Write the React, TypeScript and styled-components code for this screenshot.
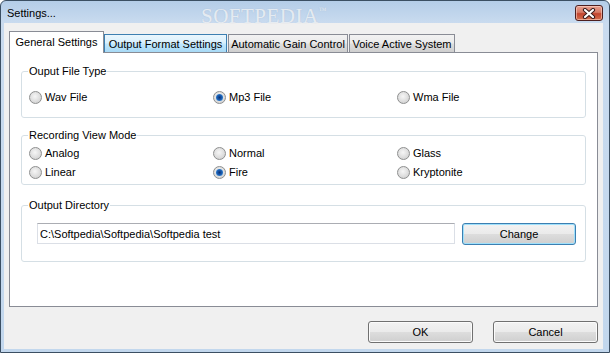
import styled, { createGlobalStyle } from 'styled-components';

const GlobalStyle = createGlobalStyle`
  html, body { margin: 0; padding: 0; background: #ffffff; }
  body { font-family: "Liberation Sans", Arial, sans-serif; font-size: 11px; color: #000; }
  * { box-sizing: border-box; }
`;

const formats = ['Wav File', 'Mp3 File', 'Wma File'];
const viewModes = ['Analog', 'Normal', 'Glass', 'Linear', 'Fire', 'Kryptonite'];

const tabs = [
    { label: 'General Settings', width: 95, state: 'active' },
    { label: 'Output Format Settings', width: 123, state: 'hover' },
    { label: 'Automatic Gain Control', width: 120, state: 'normal' },
    { label: 'Voice Active System', width: 106, state: 'normal' },
];

const App = () => {

    const __renderRadio = (label: string, checked: boolean) => {
        return (
            <RadioItem key={label}>
                <RadioCircle $checked={checked} />
                <span>{label}</span>
            </RadioItem>
        )
    }

    return (
        <>
            <GlobalStyle />
            <Window>
                <TitleBar>
                    <Title>Settings...</Title>
                    <Watermark>SOFTPEDIA<sup>™</sup></Watermark>
                    <CloseButton title="Close">
                        <svg width="14" height="11" viewBox="0 0 14 11">
                            <path d="M3 2 L11 9 M11 2 L3 9" stroke="#3a1d1d" strokeWidth="4.2" strokeLinecap="round" />
                            <path d="M3 2 L11 9 M11 2 L3 9" stroke="#ffffff" strokeWidth="2.2" strokeLinecap="round" />
                        </svg>
                    </CloseButton>
                </TitleBar>
                <Client>
                    <TabStrip>
                        {tabs.map(t => (
                            <Tab key={t.label} $w={t.width} $state={t.state}>{t.label}</Tab>
                        ))}
                    </TabStrip>
                    <Panel>
                        <Group $mt={0} $pad="13px 0 13px 7px">
                            <Legend $ml={-1}>Ouput File Type</Legend>
                            <RadioGrid>
                                {formats.map(f => __renderRadio(f, f === 'Mp3 File'))}
                            </RadioGrid>
                        </Group>
                        <Group $mt={11} $pad="5px 0 5px 7px">
                            <Legend $ml={-1}>Recording View Mode</Legend>
                            <RadioGrid>
                                {viewModes.map(m => __renderRadio(m, m === 'Fire'))}
                            </RadioGrid>
                        </Group>
                        <Group $mt={14} $pad="11px 9px 16px 15px">
                            <Legend $ml={-9}>Output Directory</Legend>
                            <DirRow>
                                <PathInput readOnly value="C:\Softpedia\Softpedia\Softpedia test" />
                                <Button $w={114} $focused>Change</Button>
                            </DirRow>
                        </Group>
                    </Panel>
                    <ButtonRow>
                        <Button $w={105}>OK</Button>
                        <Button $w={105}>Cancel</Button>
                    </ButtonRow>
                </Client>
            </Window>
        </>
    )
}

export default App;

const Window = styled.div`
    position: relative;
    width: 610px;
    height: 353px;
    display: flex;
    flex-direction: column;
    border: 1px solid #3b4f63;
    border-radius: 6px 6px 0 0;
    padding: 0 6px 3px 3px;
    background: linear-gradient(180deg, #b4cde8 0px, #c9dbef 22px, #c2d7ed 100%);
    overflow: hidden;
`

const TitleBar = styled.div`
    height: 22px;
    display: flex;
    align-items: flex-start;
    justify-content: space-between;
    padding: 0 0 0 3px;
`

const Title = styled.div`
    margin-top: 6px;
    font-size: 11px;
    line-height: 13px;
`

const Watermark = styled.div`
    position: absolute;
    left: 200px;
    top: 3px;
    font-family: "Liberation Serif", "Times New Roman", serif;
    font-size: 21px;
    letter-spacing: 0.5px;
    color: rgba(255, 255, 255, 0.7);
    text-shadow: 0 0 1px rgba(120, 140, 160, 0.35);
    pointer-events: none;

    sup {
        font-size: 8px;
        vertical-align: 10px;
    }
`

const CloseButton = styled.div`
    margin-top: 4px;
    width: 28px;
    height: 16px;
    border: 1px solid #4d1f1f;
    border-radius: 3px;
    background: linear-gradient(180deg, #e8a08f 0%, #d67a66 45%, #c2442e 55%, #d5704f 100%);
    box-shadow: inset 0 0 0 1px rgba(255, 220, 210, 0.55);
    display: flex;
    align-items: center;
    justify-content: center;
`

const Client = styled.div`
    flex: 1;
    display: flex;
    flex-direction: column;
    background: #f0f0f0;
    padding: 8px 5px 6px 5px;
`

const TabStrip = styled.div`
    height: 21px;
    display: flex;
    align-items: flex-end;
`

const Tab = styled.div<{ $w: number, $state: string }>`
    width: ${p => p.$w}px;
    height: ${p => p.$state === 'active' ? 22 : 18}px;
    margin-bottom: ${p => p.$state === 'active' ? -1 : 0}px;
    margin-right: ${p => p.$state === 'active' ? 0 : 1}px;
    position: relative;
    z-index: ${p => p.$state === 'active' ? 1 : 0};
    display: flex;
    align-items: center;
    justify-content: center;
    padding-bottom: ${p => p.$state === 'active' ? 2 : 0}px;
    white-space: nowrap;
    border: 1px solid ${p => p.$state === 'hover' ? '#3c7fb1' : '#898c95'};
    border-bottom: none;
    background: ${p => p.$state === 'active'
        ? '#ffffff'
        : p.$state === 'hover'
            ? 'linear-gradient(180deg, #eaf6fd 0%, #d9f0fc 45%, #bee6fd 55%, #a7d9f5 100%)'
            : 'linear-gradient(180deg, #f2f2f2 0%, #ebebeb 45%, #dddddd 55%, #cfcfcf 100%)'};
`

const Panel = styled.div`
    height: 255px;
    display: flex;
    flex-direction: column;
    background: #ffffff;
    border: 1px solid #898c95;
    padding: 12px 11px 0 11px;
`

const Group = styled.fieldset<{ $mt: number, $pad: string }>`
    margin: ${p => p.$mt}px 0 0 0;
    padding: ${p => p.$pad};
    min-width: 0;
    border: 1px solid #d5dfe5;
    border-radius: 3px;
`

const Legend = styled.legend<{ $ml: number }>`
    margin-left: ${p => p.$ml}px;
    padding: 0 1px;
    font-size: 11px;
    line-height: 13px;
`

const RadioGrid = styled.div`
    display: grid;
    grid-template-columns: 184px 184px 1fr;
    row-gap: 6px;
`

const RadioItem = styled.div`
    height: 13px;
    display: flex;
    align-items: center;
    gap: 3px;
    line-height: 13px;
`

const RadioCircle = styled.span<{ $checked?: boolean }>`
    width: 13px;
    height: 13px;
    flex: none;
    border-radius: 50%;
    border: 1px solid #8e8f8f;
    background: radial-gradient(circle at 45% 40%, #f6f6f6 0%, #e2e2e2 45%, #c9c9c9 100%);
    display: flex;
    align-items: center;
    justify-content: center;

    &::after {
        content: '';
        display: ${p => p.$checked ? 'block' : 'none'};
        width: 7px;
        height: 7px;
        border-radius: 50%;
        background: radial-gradient(circle at 50% 50%, #0b3275 0%, #1a5fb5 50%, #5ab0ee 100%);
    }
`

const DirRow = styled.div`
    display: flex;
    align-items: flex-start;
    gap: 7px;
`

const PathInput = styled.input`
    width: 418px;
    height: 21px;
    margin: 0;
    padding: 0 2px;
    border: 1px solid #dbdfe6;
    border-top-color: #abadb3;
    font-family: "Liberation Sans", Arial, sans-serif;
    font-size: 11px;
    color: #000;
    background: #ffffff;
    outline: none;
`

const Button = styled.button<{ $w: number, $focused?: boolean }>`
    width: ${p => p.$w}px;
    height: 22px;
    margin: 0;
    padding: 0;
    font-family: "Liberation Sans", Arial, sans-serif;
    font-size: 11px;
    color: #000;
    border: 1px solid ${p => p.$focused ? '#3c7fb1' : '#707070'};
    border-radius: 3px;
    background: linear-gradient(180deg, #f2f2f2 0%, #ebebeb 48%, #dddddd 52%, #cfcfcf 100%);
    box-shadow: inset 0 0 0 1px ${p => p.$focused ? '#9fe0fb' : '#fbfbfb'};
`

const ButtonRow = styled.div`
    margin-top: 14px;
    display: flex;
    justify-content: flex-end;
    gap: 20px;
`
